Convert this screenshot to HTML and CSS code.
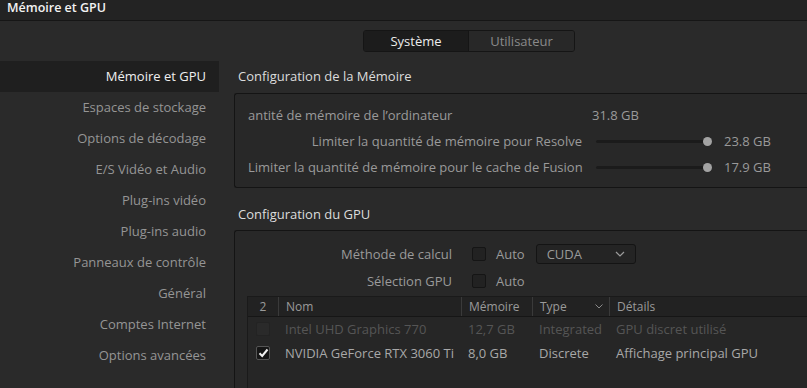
FILE: index.html
```html
<!DOCTYPE html>
<html lang="fr">
<head>
<meta charset="utf-8">
<title>Mémoire et GPU</title>
<link rel="stylesheet" href="styles.css">
</head>
<body>
<div class="titlebar">Mémoire et GPU</div>
<div class="tabs-row">
  <div class="tabs">
    <div class="tab active">Système</div>
    <div class="tab">Utilisateur</div>
  </div>
</div>
<div class="main">
  <nav class="sidebar">
    <div class="nav-item active">Mémoire et GPU</div>
    <div class="nav-item">Espaces de stockage</div>
    <div class="nav-item">Options de décodage</div>
    <div class="nav-item">E/S Vidéo et Audio</div>
    <div class="nav-item">Plug-ins vidéo</div>
    <div class="nav-item">Plug-ins audio</div>
    <div class="nav-item">Panneaux de contrôle</div>
    <div class="nav-item">Général</div>
    <div class="nav-item">Comptes Internet</div>
    <div class="nav-item">Options avancées</div>
  </nav>
  <section class="content">
    <h2 class="section-title first">Configuration de la Mémoire</h2>
    <div class="panel mem-panel">
      <div class="mem-row">
        <div class="mem-label left">antité de mémoire de l’ordinateur</div>
        <div class="mem-total">31.8 GB</div>
      </div>
      <div class="mem-row">
        <div class="mem-label">Limiter la quantité de mémoire pour Resolve</div>
        <div class="slider"><div class="knob"></div></div>
        <div class="mem-value">23.8 GB</div>
      </div>
      <div class="mem-row">
        <div class="mem-label">Limiter la quantité de mémoire pour le cache de Fusion</div>
        <div class="slider"><div class="knob"></div></div>
        <div class="mem-value">17.9 GB</div>
      </div>
    </div>
    <h2 class="section-title second">Configuration du GPU</h2>
    <div class="panel gpu-panel">
      <div class="gpu-row">
        <div class="gpu-label">Méthode de calcul</div>
        <span class="checkbox"></span>
        <span class="auto">Auto</span>
        <div class="dropdown">
          <span>CUDA</span>
          <svg class="chev" width="10" height="6" viewBox="0 0 10 6"><path d="M1 1 L5 5 L9 1" fill="none" stroke="#9a9a9a" stroke-width="1.2"/></svg>
        </div>
      </div>
      <div class="gpu-row">
        <div class="gpu-label">Sélection GPU</div>
        <span class="checkbox"></span>
        <span class="auto">Auto</span>
      </div>
      <div class="table">
        <div class="trow thead">
          <div class="c c-num">2</div>
          <div class="c c-name">Nom</div>
          <div class="c c-mem">Mémoire</div>
          <div class="c c-type">Type
            <svg class="chev small" width="8" height="5" viewBox="0 0 8 5"><path d="M0.5 0.5 L4 4 L7.5 0.5" fill="none" stroke="#8a8a8a" stroke-width="1"/></svg>
          </div>
          <div class="c c-det">Détails</div>
        </div>
        <div class="trow dim">
          <div class="c c-num"><span class="checkbox small dimbox"></span></div>
          <div class="c c-name">Intel UHD Graphics 770</div>
          <div class="c c-mem">12,7 GB</div>
          <div class="c c-type">Integrated</div>
          <div class="c c-det">GPU discret utilisé</div>
        </div>
        <div class="trow">
          <div class="c c-num"><span class="checkbox small checked">
            <svg width="11" height="10" viewBox="0 0 11 10"><path d="M1.5 5.2 L4.2 8 L9.5 1.5" fill="none" stroke="#f2f2f2" stroke-width="2"/></svg>
          </span></div>
          <div class="c c-name">NVIDIA GeForce RTX 3060 Ti</div>
          <div class="c c-mem">8,0 GB</div>
          <div class="c c-type">Discrete</div>
          <div class="c c-det">Affichage principal GPU</div>
        </div>
      </div>
    </div>
  </section>
</div>
</body>
</html>
```
FILE: styles.css
```css
* { box-sizing: border-box; }
html, body {
  margin: 0;
  padding: 0;
  height: 388px;
  overflow: hidden;
}
body {
  background: #2a2a2a;
  font-family: "Open Sans", "DejaVu Sans", sans-serif;
  font-size: 13px;
  color: #9a9a9a;
}
.titlebar {
  height: 21px;
  background: #232323;
  border-bottom: 1px solid #161616;
  color: #f2f2f2;
  font-size: 12.5px;
  font-weight: 600;
  line-height: 15px;
  padding-left: 7px;
}
.tabs-row {
  display: flex;
  padding-left: 363px;
  margin-top: 9px;
}
.tabs {
  display: flex;
  border: 1px solid #151515;
  border-radius: 3px;
  height: 22px;
  overflow: hidden;
}
.tab {
  width: 105px;
  text-align: center;
  line-height: 20px;
  background: #282828;
  color: #8a8a8a;
}
.tab.active {
  background: #1c1c1c;
  color: #ececec;
  border-right: 1px solid #151515;
}
.main {
  display: flex;
  margin-top: 9px;
}
.sidebar {
  width: 219px;
  flex: none;
}
.nav-item {
  height: 31px;
  line-height: 31px;
  text-align: right;
  padding-right: 13px;
  color: #959595;
}
.nav-item.active {
  background: #1f1f1f;
  color: #efefef;
}
.content {
  flex: 1;
  padding-left: 15px;
  min-width: 0;
}
.section-title {
  margin: 0;
  font-size: 13px;
  font-weight: 400;
  color: #dcdcdc;
  padding-left: 4px;
  line-height: 18px;
}
.section-title.first { padding-top: 6px; padding-bottom: 8px; }
.section-title.second { padding-top: 17px; padding-bottom: 7px; }
.panel {
  border: 1px solid #141414;
  border-right: none;
  border-radius: 3px 0 0 3px;
  background: #282828;
}
.mem-panel {
  padding: 8px 0 7px 13px;
}
.mem-row {
  display: flex;
  align-items: center;
  height: 26px;
}
.mem-label {
  width: 334px;
  text-align: right;
  white-space: nowrap;
  flex: none;
}
.mem-label.left { text-align: left; }
.mem-total {
  margin-left: 10px;
}
.slider {
  position: relative;
  margin-left: 14px;
  width: 112px;
  height: 3px;
  background: #1b1b1b;
  border-radius: 2px;
}
.knob {
  position: absolute;
  right: -4px;
  top: -3px;
  width: 9px;
  height: 9px;
  border-radius: 50%;
  background: #a3a3a3;
}
.mem-value {
  margin-left: 16px;
}
.gpu-panel {
  padding: 9px 0 0 12px;
  height: 158px;
  border-bottom: none;
  border-radius: 3px 0 0 0;
  overflow: hidden;
}
.gpu-row {
  display: flex;
  align-items: center;
  height: 27px;
}
.gpu-label {
  width: 205px;
  text-align: right;
  flex: none;
}
.checkbox {
  display: inline-flex;
  align-items: center;
  justify-content: center;
  width: 14px;
  height: 14px;
  border: 1px solid #151515;
  border-radius: 2px;
  background: #222;
  margin-left: 20px;
}
.auto { margin-left: 10px; }
.dropdown {
  display: flex;
  align-items: center;
  justify-content: space-between;
  margin-left: 11px;
  width: 100px;
  height: 20px;
  border: 1px solid #141414;
  border-radius: 3px;
  background: #242424;
  padding: 0 10px 0 10px;
}
.table {
  margin-top: 2px;
  border-top: 1px solid #1a1a1a;
  border-left: 1px solid #1a1a1a;
  background: #262626;
  height: 100px;
}
.trow {
  display: flex;
  align-items: center;
  height: 24px;
  color: #a8a8a8;
}
.trow.thead {
  height: 20px;
  background: #222222;
  border-bottom: 1px solid #161616;
  font-size: 12px;
  color: #9a9a9a;
}
.trow.dim { color: #555; }
.c {
  flex: none;
  white-space: nowrap;
  height: 100%;
  display: flex;
  align-items: center;
  padding-left: 7px;
}
.thead .c { border-left: 1px solid #3a3a3a; }
.thead .c:first-child { border-left: none; }
.c-num { width: 30px; justify-content: center; padding-left: 0; }
.c-name { width: 183px; }
.c-mem { width: 71px; }
.c-type { width: 77px; justify-content: space-between; padding-right: 6px; }
.c-det { flex: 1; }
.checkbox.small {
  margin-left: 0;
  width: 14px;
  height: 14px;
  background: #1e1e1e;
  border-color: #111;
}
.checkbox.dimbox { background: #2a2a2a; border-color: #232323; }
.checkbox.checked { background: #161616; border-color: #555; }
```
